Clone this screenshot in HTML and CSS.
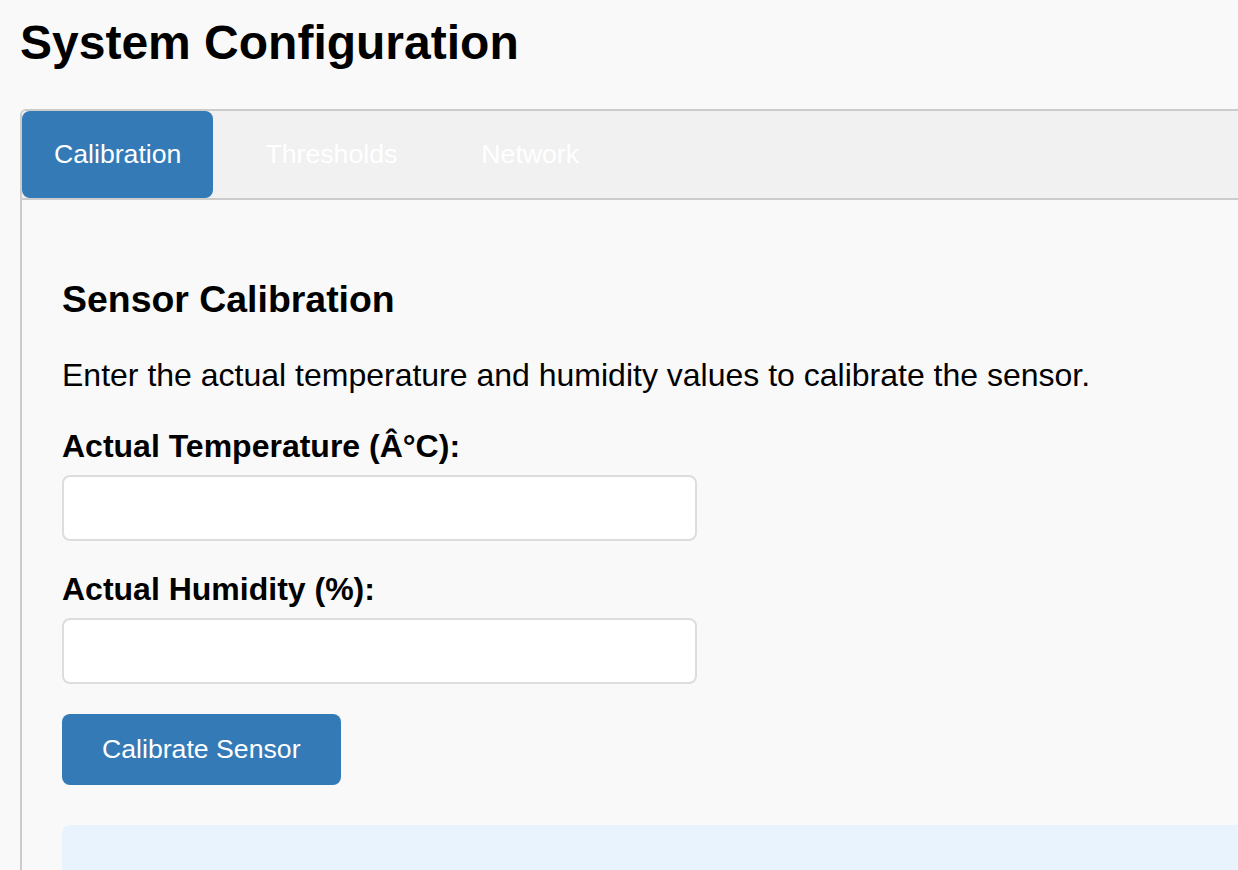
FILE: index.html
```html
<!DOCTYPE html>
<html lang="en">
<head>
<meta charset="utf-8">
<title>System Configuration</title>
<link rel="stylesheet" href="styles.css">
</head>
<body>
  <h1 class="page-title">System Configuration</h1>
  <div class="panel">
    <div class="tabs">
      <button class="tab active">Calibration</button>
      <button class="tab">Thresholds</button>
      <button class="tab">Network</button>
    </div>
    <div class="content">
      <h3 class="section-title">Sensor Calibration</h3>
      <p class="intro">Enter the actual temperature and humidity values to calibrate the sensor.</p>
      <div class="field">
        <label class="field-label" for="temp">Actual Temperature (Â°C):</label>
        <input class="field-input" id="temp" type="number">
      </div>
      <div class="field">
        <label class="field-label" for="hum">Actual Humidity (%):</label>
        <input class="field-input" id="hum" type="number">
      </div>
      <button class="btn">Calibrate Sensor</button>
      <div class="info"></div>
    </div>
  </div>
</body>
</html>
```

FILE: styles.css
```css
html {
  overflow: hidden;
}

body {
  margin: 0;
  padding: 15px 20px 0;
  background: #f9f9f9;
  color: #000;
  font-family: "Liberation Sans", Arial, sans-serif;
  font-size: 32px;
}

.page-title {
  margin: 0 0 39px;
  font-size: 48px;
  font-weight: bold;
  line-height: normal;
}

.panel {
  width: 1400px;
  border: 2px solid #ccc;
  border-radius: 6px;
  overflow: hidden;
}

.tabs {
  display: flex;
  gap: 20px;
  background: #f1f1f1;
  border-bottom: 2px solid #ccc;
}

.tab {
  font-family: "Liberation Sans", Arial, sans-serif;
  font-size: 26.667px;
  line-height: normal;
  padding: 28px 32px;
  border: none;
  border-radius: 8px;
  background: transparent;
  color: #fff;
}

.tab.active {
  background: #337ab7;
}

.content {
  padding: 40px;
}

.section-title {
  margin: 38px 0 36px;
  font-size: 37.44px;
  font-weight: bold;
  line-height: normal;
}

.intro {
  margin: 0 0 34px;
  line-height: normal;
}

.field {
  margin-bottom: 30px;
}

.field-label {
  display: block;
  margin-bottom: 10px;
  font-weight: bold;
  line-height: normal;
}

.field-input {
  display: block;
  box-sizing: border-box;
  width: 635px;
  height: 66px;
  border: 2px solid #ddd;
  border-radius: 8px;
  background: #fff;
  padding: 0 16px;
  font-family: "Liberation Sans", Arial, sans-serif;
  font-size: 32px;
}

.btn {
  display: block;
  margin-top: 1px;
  padding: 20px 40px;
  border: none;
  border-radius: 8px;
  background: #337ab7;
  color: #fff;
  font-family: "Liberation Sans", Arial, sans-serif;
  font-size: 26.667px;
  line-height: normal;
}

.info {
  margin-top: 40px;
  height: 200px;
  border-radius: 8px;
  background: #e8f3fd;
}
```
